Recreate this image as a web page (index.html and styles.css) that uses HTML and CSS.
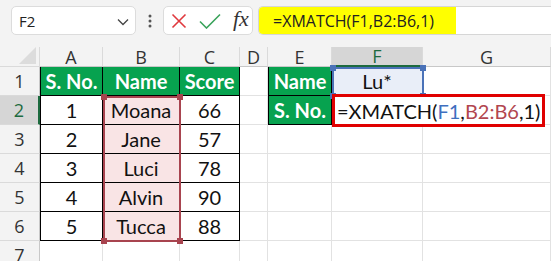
FILE: index.html
```html
<!DOCTYPE html>
<html lang="en">
<head>
    <meta charset="UTF-8">
    <title>XMATCH wildcard</title>
    <link rel="stylesheet" href="styles.css">
</head>
<body>

<div class="toolbar">
    <div class="namebox">
        <span>F2</span>
        <svg class="chevron" width="12" height="8" viewBox="0 0 12 8"><path d="M1 1.5 L6 6.5 L11 1.5" fill="none" stroke="#444" stroke-width="1.3"/></svg>
    </div>
    <div class="dots">
        <svg width="4" height="14" viewBox="0 0 4 14"><circle cx="2" cy="2" r="1.5" fill="#555"/><circle cx="2" cy="7" r="1.5" fill="#555"/><circle cx="2" cy="12" r="1.5" fill="#555"/></svg>
    </div>
    <div class="fxbox">
        <svg width="16" height="16" viewBox="0 0 16 16"><path d="M1.5 1.5 L14.5 14.5 M14.5 1.5 L1.5 14.5" stroke="#e0393e" stroke-width="1.6"/></svg>
        <svg width="22" height="16" viewBox="0 0 22 16"><path d="M1 8.5 L7.5 15 L21 1.5" fill="none" stroke="#3aa35b" stroke-width="1.6"/></svg>
        <span class="fx">fx</span>
    </div>
    <div class="formula">
        <span class="formula-text">=XMATCH(F1,B2:B6,1)</span>
    </div>
</div>

<div class="sheet">
    <div class="corner"><span class="tri"></span></div>
    <div class="colhead">A</div>
    <div class="colhead">B</div>
    <div class="colhead">C</div>
    <div class="colhead">D</div>
    <div class="colhead">E</div>
    <div class="colhead active">F</div>
    <div class="colhead">G</div>

    <div class="rowhead">1</div>
    <div class="cell tb first green">S. No.</div>
    <div class="cell tb green">Name</div>
    <div class="cell tb green">Score</div>
    <div class="cell"></div>
    <div class="cell tb first green">Name</div>
    <div class="cell tb lookup">Lu*</div>
    <div class="cell"></div>

    <div class="rowhead active">2</div>
    <div class="cell tb first">1</div>
    <div class="cell tb pink">Moana</div>
    <div class="cell tb">66</div>
    <div class="cell"></div>
    <div class="cell tb first green">S. No.</div>
    <div class="cell tb"></div>
    <div class="cell"></div>

    <div class="rowhead">3</div>
    <div class="cell tb first">2</div>
    <div class="cell tb pink">Jane</div>
    <div class="cell tb">57</div>
    <div class="cell"></div>
    <div class="cell"></div>
    <div class="cell"></div>
    <div class="cell"></div>

    <div class="rowhead">4</div>
    <div class="cell tb first">3</div>
    <div class="cell tb pink">Luci</div>
    <div class="cell tb">78</div>
    <div class="cell"></div>
    <div class="cell"></div>
    <div class="cell"></div>
    <div class="cell"></div>

    <div class="rowhead">5</div>
    <div class="cell tb first">4</div>
    <div class="cell tb pink">Alvin</div>
    <div class="cell tb">90</div>
    <div class="cell"></div>
    <div class="cell"></div>
    <div class="cell"></div>
    <div class="cell"></div>

    <div class="rowhead">6</div>
    <div class="cell tb first">5</div>
    <div class="cell tb pink">Tucca</div>
    <div class="cell tb">88</div>
    <div class="cell"></div>
    <div class="cell"></div>
    <div class="cell"></div>
    <div class="cell"></div>

    <div class="rowhead">7</div>
    <div class="cell"></div>
    <div class="cell"></div>
    <div class="cell"></div>
    <div class="cell"></div>
    <div class="cell"></div>
    <div class="cell"></div>
    <div class="cell"></div>

    <!-- range highlights from the formula being edited -->
    <div class="range range-b">
        <span class="handle tl"></span><span class="handle tr"></span>
        <span class="handle bl"></span><span class="handle br"></span>
    </div>
    <div class="range range-f">
        <span class="handle tl"></span><span class="handle tr"></span>
        <span class="handle bl"></span><span class="handle br"></span>
    </div>

    <div class="editbox">=XMATCH(<span class="ref-f">F1</span>,<span class="ref-b">B2:B6</span>,1)<span class="caret"></span></div>
</div>

</body>
</html>
```

FILE: styles.css
```css
body {
    margin: 0;
    background-color: #f3f3f3;
    font-family: 'Open Sans', sans-serif;
    width: 551px;
    height: 261px;
    overflow: hidden;
}

.toolbar {
    display: flex;
    align-items: stretch;
    height: 29px;
    padding: 6px 0 12px 11px;
}

.namebox {
    width: 125px;
    box-sizing: border-box;
    background-color: #fff;
    border: 1px solid #dcdcdc;
    border-radius: 5px;
    display: flex;
    align-items: center;
    justify-content: space-between;
    padding: 0 6px 0 7px;
    font-size: 15px;
    color: #222;
}

.chevron {
    margin-top: 2px;
}

.dots {
    width: 27px;
    display: flex;
    align-items: center;
    justify-content: center;
}

.fxbox {
    width: 90px;
    box-sizing: border-box;
    background-color: #fff;
    border: 1px solid #dcdcdc;
    border-radius: 5px;
    display: flex;
    align-items: center;
    gap: 12px;
    padding: 0 0 0 7px;
}

.fx {
    font-family: 'Liberation Serif', serif;
    font-style: italic;
    font-size: 22px;
    color: #333;
    margin-top: -3px;
}

.formula {
    flex: 1;
    margin-left: 5px;
    background-color: #fff;
    border: 1px solid #d6d6d6;
    border-right: none;
    border-radius: 5px 0 0 5px;
    display: flex;
}

.formula-text {
    background-color: #ffff00;
    border-radius: 4px 0 0 4px;
    padding: 0 22px 0 14px;
    font-size: 16px;
    color: #222;
    display: flex;
    align-items: center;
}

.sheet {
    position: relative;
    display: grid;
    grid-template-columns: 40px 63px 77px 60px 28px 64px 91px 128px;
    grid-template-rows: 20px repeat(7, 29px);
    background-color: #fff;
}

.corner,
.colhead,
.rowhead {
    background-color: #f3f3f3;
    color: #333;
    box-sizing: border-box;
    display: flex;
    align-items: center;
    justify-content: center;
    font-size: 18px;
}

.corner {
    border-right: 1px solid #dadada;
    border-bottom: 1px solid #dadada;
    position: relative;
}

.tri {
    position: absolute;
    right: 3px;
    bottom: 2px;
    width: 0;
    height: 0;
    border-left: 17px solid transparent;
    border-bottom: 17px solid #dcdcdc;
}

.colhead {
    border-right: 1px solid #dadada;
    border-bottom: 1px solid #c8c8c8;
}

.colhead.active {
    background-color: #d6d6d6;
    color: #1d6b3f;
    border-bottom: 2px solid #1d6b3f;
}

.rowhead {
    border-right: 1px solid #c8c8c8;
    border-bottom: 1px solid #dadada;
}

.rowhead.active {
    background-color: #d6d6d6;
    color: #1d6b3f;
    border-right: 2px solid #1d6b3f;
}

.cell {
    box-sizing: border-box;
    border-right: 1px solid #e2e2e2;
    border-bottom: 1px solid #e2e2e2;
    display: flex;
    align-items: center;
    justify-content: center;
    font-family: 'Lato', sans-serif;
    font-size: 20px;
    color: #111;
}

.cell.tb {
    border-right-color: #000;
    border-bottom-color: #000;
}

.cell.first {
    border-left: 1px solid #000;
}

.cell.green {
    background-color: #07a24f;
    color: #fff;
    font-weight: bold;
}

.cell.pink {
    background-color: #f9e4e5;
}

.cell.lookup {
    background-color: #e9eef8;
}

.range {
    position: absolute;
    box-sizing: border-box;
}

.range-b {
    left: 103px;
    top: 49px;
    width: 78px;
    height: 146px;
    border: 2px solid #a8444f;
}

.range-f {
    left: 332px;
    top: 20px;
    width: 92px;
    height: 30px;
    border: 2px solid #4a72b8;
}

.handle {
    position: absolute;
    width: 6px;
    height: 6px;
}

.range-b .handle {
    background-color: #a8444f;
}

.range-f .handle {
    background-color: #4a72b8;
}

.handle.tl { left: -4px; top: -4px; }
.handle.tr { right: -4px; top: -4px; }
.handle.bl { left: -4px; bottom: -4px; }
.handle.br { right: -4px; bottom: -4px; }

.editbox {
    position: absolute;
    left: 332px;
    top: 47px;
    width: 213px;
    height: 33px;
    box-sizing: border-box;
    border: 3px solid #e00000;
    background-color: #fff;
    display: flex;
    align-items: center;
    padding-left: 2px;
    font-family: 'Lato', sans-serif;
    font-size: 20px;
    color: #111;
}

.ref-f {
    color: #3f6fbf;
}

.ref-b {
    color: #b2464f;
}

.caret {
    width: 1px;
    height: 22px;
    background-color: #111;
    margin-left: 2px;
}
```
